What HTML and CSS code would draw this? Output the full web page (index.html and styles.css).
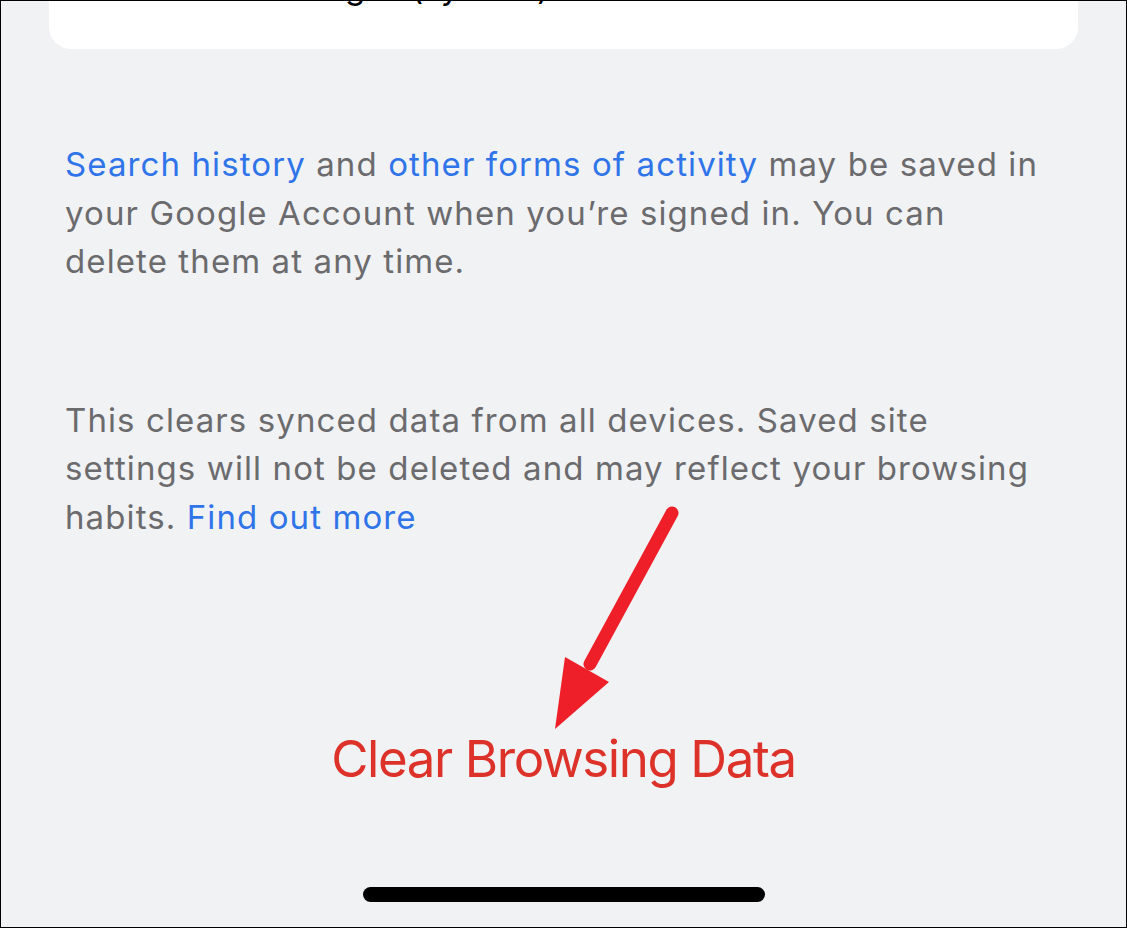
FILE: index.html
```html
<!DOCTYPE html>
<html lang="en">
<head>
    <meta charset="UTF-8">
    <meta name="viewport" content="width=device-width, initial-scale=1.0">
    <title>Clear Browsing Data</title>
    <link rel="stylesheet" href="styles.css">
</head>
<body>
    <div class="screen">
        <div class="card">
            <p class="card-line">Cached Images (synced)</p>
        </div>

        <p class="note first">
            <a href="">Search history</a> and <a href="">other forms of activity</a> may be saved in your Google Account when you’re signed in. You can delete them at any time.
        </p>

        <p class="note second">
            This clears synced data from all devices. Saved site settings will not be deleted and may reflect your browsing habits. <a href="">Find out more</a>
        </p>

        <button class="clear-btn" type="button">Clear Browsing Data</button>

        <div class="home-bar"></div>

        <!-- annotation arrow -->
        <svg class="arrow" width="1127" height="928" viewBox="0 0 1127 928">
            <line x1="672" y1="513" x2="590" y2="664" stroke="#ee1f28" stroke-width="13" stroke-linecap="round"/>
            <polygon points="555,729 565,657 609,682" fill="#ee1f28"/>
        </svg>
    </div>
</body>
</html>
```

FILE: styles.css
```css
body {
    margin: 0;
    background-color: #f2f2f7;
    font-family: Inter, "Noto Sans", sans-serif;
}
.screen {
    position: relative;
    box-sizing: border-box;
    width: 1127px;
    height: 928px;
    border: 1px solid #000;
    background-color: #f1f2f4;
    display: flex;
    flex-direction: column;
    overflow: hidden;
}
.card {
    margin: -1px 48px 0 48px;
    height: 49px;
    background: #fff;
    border-radius: 0 0 22px 22px;
    overflow: hidden;
    flex-shrink: 0;
}
.card-line {
    margin: -33px 0 0 0;
    padding-left: 110px;
    font-size: 33px;
    line-height: 40px;
    color: #000;
    white-space: nowrap;
}
.note {
    margin: 0;
    padding: 0 76px 0 64px;
    font-size: 33px;
    line-height: 48.5px;
    letter-spacing: 1.1px;
    color: #6b6b6e;
}
.note a {
    color: #2f74e9;
    text-decoration: none;
}
.note.first {
    margin-top: 91px;
}
.note.second {
    margin-top: 110px;
}
.clear-btn {
    margin: 188px auto 0 auto;
    padding: 0;
    border: none;
    background: none;
    font-family: Inter, "Noto Sans", sans-serif;
    font-size: 51px;
    line-height: 60px;
    letter-spacing: -1.4px;
    color: #dc3229;
    cursor: pointer;
}
.home-bar {
    margin: 98px auto 0 auto;
    width: 402px;
    height: 15px;
    border-radius: 8px;
    background: #000;
}
.arrow {
    position: absolute;
    left: -1px;
    top: -1px;
    pointer-events: none;
}
```
